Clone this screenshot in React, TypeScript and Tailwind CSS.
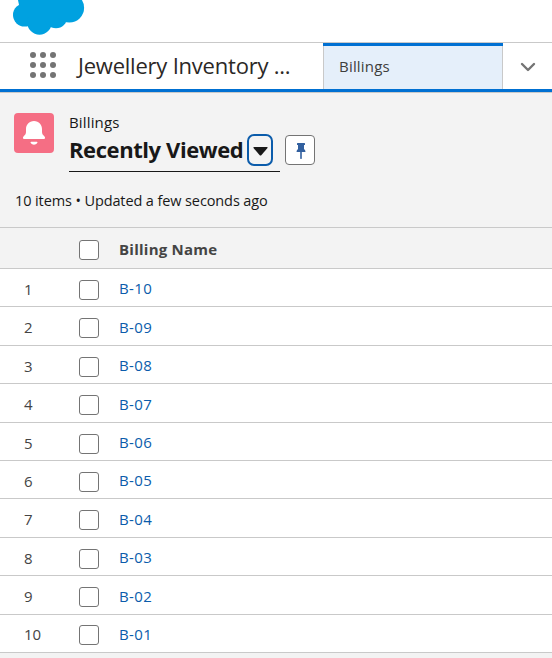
const names = ['B-10', 'B-09', 'B-08', 'B-07', 'B-06', 'B-05', 'B-04', 'B-03', 'B-02', 'B-01'];

function Box() {
  return <span className="block size-5 shrink-0 rounded-[3px] border border-[#747474] bg-white" />;
}

function CloudLogo() {
  return (
    <svg className="ml-3 block h-[36px] w-[73px]" viewBox="12 0 73 36" fill="#00a1e0">
      <circle cx="24.5" cy="15" r="11.5" />
      <circle cx="39.5" cy="22.4" r="12.3" />
      <circle cx="56" cy="17" r="11.2" />
      <circle cx="69.3" cy="7.8" r="14.8" />
      <path d="M18 0L19 5L30 20H55L70 10V0Z" />
    </svg>
  );
}

function AppLauncher() {
  return (
    <svg className="-mt-0.5 block h-[26px] w-[26px]" viewBox="0 0 26 26" fill="#747474">
      {[3, 13, 23].map((y) => [3, 13, 23].map((x) => <circle key={`${x}-${y}`} cx={x} cy={y} r="3" />))}
    </svg>
  );
}

export default function App() {
  return (
    <div className="h-[658px] w-[552px] overflow-hidden bg-[#f3f3f3] font-['Open_Sans','Noto_Sans',sans-serif] text-[15px] text-[#181818]">
      <header className="h-[43px] border-b border-[#c9c9c9] bg-white">
        <CloudLogo />
      </header>
      <nav className="flex h-[49px] border-b-[3px] border-[#0070d2] bg-white">
        <div className="flex w-[323px] items-center pl-[30px]">
          <AppLauncher />
          <span className="-mt-0.5 ml-[22px] whitespace-nowrap text-[22px] leading-7 tracking-[-0.22px] text-[#2b2826]">Jewellery Inventory ...</span>
        </div>
        <div className="flex w-[180px] flex-col border-x border-[#c9c9c9] bg-[#e5effa]">
          <div className="-mx-px h-[3px] bg-[#0070d2]" />
          <span className="pl-[15px] pt-[10px] leading-5 tracking-[0.2px] text-[#3e3e3c]">Billings</span>
        </div>
        <div className="flex flex-1 items-center justify-center">
          <svg className="mt-px h-[10px] w-4" viewBox="0 0 16 10" fill="none" stroke="#747474" strokeWidth="2.4" strokeLinecap="round" strokeLinejoin="round"><path d="M2 2L8 8L14 2" /></svg>
        </div>
      </nav>
      <section className="h-[136px] border-y border-[#c9c9c9] bg-[#f3f3f3]">
        <div className="flex pl-[14px] pt-5">
          <div className="flex size-10 items-center justify-center rounded-[4px] bg-[#f56e84]">
            <svg className="size-6" viewBox="0 0 24 24" fill="white">
              <path d="M12 0C7 0 4 4 4 8V11C4 13 3 14 1.7 15.3C.4 16.5 1 18 2.3 18H21.7C23 18 23.6 16.5 22.3 15.3C21 14 20 13 20 11V8C20 4 17 0 12 0ZM9.3 20.8H14.7C15.7 20.8 15.7 21.5 15.2 22.1C13.6 24.2 10.4 24.2 8.8 22.1C8.3 21.5 8.3 20.8 9.3 20.8Z" />
            </svg>
          </div>
          <div className="ml-[15px] h-[59px] w-[211px] border-b border-[#181818]">
            <div className="-mt-px h-[22px] leading-5 tracking-[0.15px]">Billings</div>
            <div className="flex h-8 items-center">
              <span className="-mt-[3px] w-[178px] whitespace-nowrap text-[22px] font-bold leading-7 tracking-[-0.42px]">Recently Viewed</span>
              <span className="flex h-8 w-[26px] items-center justify-center rounded-[7px] border-2 border-[#0b5cab]">
                <svg className="mt-0.5 h-[9px] w-[15px] shrink-0" viewBox="0 0 15 9" fill="#181818"><path d="M1 0H14Q15 0 14.5 1L8.5 8Q7.5 9 6.5 8L.5 1Q0 0 1 0Z" /></svg>
              </span>
            </div>
          </div>
          <div className="ml-[5px] mt-[22px] flex h-[30px] w-[30px] items-center justify-center rounded-[4px] border border-[#747474] bg-white">
            <svg className="ml-0.5 mt-0.5 h-4 w-[10px]" viewBox="0 0 10 16" fill="#32609f"><path d="M1.5 0H8.5Q9 0 9 1V2H8V6Q9.5 7 9.5 9H5.8V15.5Q5 16.5 4.2 15.5V9H.5Q.5 7 2 6V2H1V1Q1 0 1.5 0Z" /></svg>
          </div>
        </div>
        <p className="ml-[15px] mt-[19px] whitespace-nowrap text-[14.5px] leading-5 tracking-[-0.11px]">10 items • Updated a few seconds ago</p>
      </section>
      <div className="flex h-[41px] items-center border-b border-[#c9c9c9] pl-[79px] pt-1">
        <Box />
        <span className="-mt-0.5 ml-5 font-bold leading-5 tracking-[0.25px] text-[#444444]">Billing Name</span>
      </div>
      {names.map((name, i) => (
        <div key={name} className="flex h-[38.4px] items-center border-b border-[#c9c9c9] bg-white pt-[4.5px] leading-5">
          <span className="mb-[2px] w-[79px] pl-6 text-[#444444]">{i + 1}</span>
          <Box />
          <a className="mb-[3px] ml-5 tracking-[0.35px] text-[#0b5cab]">{name}</a>
        </div>
      ))}
    </div>
  );
}
